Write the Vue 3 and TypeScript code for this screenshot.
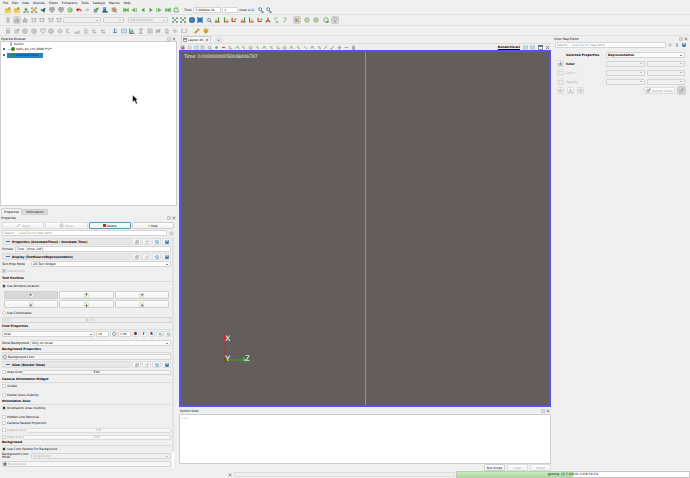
<script setup lang="ts">
import { ref } from 'vue'

const menus = ['File', 'Edit', 'View', 'Sources', 'Filters', 'Extractors', 'Tools', 'Catalyst', 'Macros', 'Help']

const fileTools = ['folder', 'folder', 'import', 'expand', 'connect', 'shield', 'shield', 'refresh', 'undo', 'redo', 'leaf', 'server', 'palette']
const vcrTools = ['first', 'stepback', 'playback', 'play', 'stepfwd', 'last', 'loop']
const colorTools = ['doc', 'bars', 'bars', 'range', 'range', 'range', 'range']
const cameraTools = ['fit', 'fit', 'globe', 'box', 'zoombox', 'axisA', 'axisB', 'axisC', 'axisA', 'axisB', 'axisC', 'iso', 'rotl', 'rotr']
const centerTools = ['orient', 'center', 'pick', 'reset', 'lamp']
const filterTools = ['calc', 'leafgray', 'cube', 'cube', 'shieldgray', 'cube', 'target', 'bars2', 'warp', 'stack', 'tree', 'tree']
const dataTools = ['plot', 'table', 'hist', 'sigma', 'sheet', 'stats', 'stack', 'sun', 'brace']
const rulerTools = ['ruler', 'tape']
const viewTools = ['redgrid', 'graydoc', 'table', 'sheet', 'zoombox', 'plus', 'minus', 'corner', 'selA', 'selB', 'poly', 'selB', 'selA', 'selB', 'corner', 'poly', 'selA', 'selB', 'arrow', 'selA', 'selB', 'pen', 'penred', 'plusgray', 'minusgray', 'trash']
const pressed = ['orient', 'lamp']
const headTools = ['copy', 'paste', 'reload', 'disk']
const anchors = [
  { id: 'tl', x: 5, y: 5 }, { id: 'tc', x: 8, y: 4 }, { id: 'tr', x: 11, y: 5 },
  { id: 'bl', x: 5, y: 11 }, { id: 'bc', x: 8, y: 12 }, { id: 'br', x: 11, y: 11 },
]
const anchor = ref('tl')
const location = ref('window')
const memory = ref(50)
</script>

<template>
  <div class="app">
    <svg class="defs" aria-hidden="true">
      <symbol id="folder" viewBox="0 0 16 16"><path d="M1 4h5l2 2h7v9H1z" fill="#d9a520" /><path d="M3 8h13l-2 7H1z" fill="#f6cf52" /><path d="M9 1h5v5h-5z" fill="#6b9a45" /></symbol>
      <symbol id="import" viewBox="0 0 16 16"><path d="M8 1l5 7H3z" fill="#55a148" /><path d="M8 7v5M3 14l5-4 5 4" stroke="#64735f" stroke-width="2" fill="none" /><path d="M1 12h4v4H1zM11 12h4v4h-4z" fill="#78927a" /></symbol>
      <symbol id="expand" viewBox="0 0 16 16"><path d="M4 4l8 8M12 4l-8 8" stroke="#e2b52c" stroke-width="4" /><path d="M1 1h5L1 6zM15 1h-5l5 5zM1 15h5l-5-5zM15 15h-5l5-5z" fill="#236aa3" /></symbol>
      <symbol id="connect" viewBox="0 0 16 16"><path d="M1 8l14-6-4 13-4-4z" fill="#214d64" /><path d="M1 8l10-4-5 7z" fill="#4fa64a" /></symbol>
      <symbol id="shield" viewBox="0 0 16 16"><path d="M2 2h12v7l-6 6-6-6z" fill="#d5d5d5" stroke="#868686" stroke-width="2" /><path d="M3 6h10M8 3v10" stroke="#888" stroke-width="2" /></symbol>
      <symbol id="shieldgray" viewBox="0 0 16 16"><path d="M2 2h12v7l-6 6-6-6z" fill="#ddd" stroke="#aaa" stroke-width="2" /></symbol>
      <symbol id="refresh" viewBox="0 0 16 16"><circle cx="8" cy="8" r="6" fill="#dcefd8" stroke="#58a44b" stroke-width="2" /><path d="M4 8h8M8 4l4 4-4 4" stroke="#58a44b" stroke-width="2" fill="none" /></symbol>
      <symbol id="undo" viewBox="0 0 16 16"><path d="M0 7l6-5v3c6-1 10 3 9 8-2-4-5-5-9-4v4z" fill="#cf2a1e" /></symbol>
      <symbol id="redo" viewBox="0 0 16 16"><path d="M15 7L9 3v3C4 5 1 8 2 12c2-3 4-4 7-3v3z" fill="#bbb" /></symbol>
      <symbol id="leaf" viewBox="0 0 16 16"><path d="M2 5h9v10H2z" fill="#8b9ba0" /><path d="M7 8C7 3 10 1 15 1c0 6-3 9-8 7z" fill="#4ba044" /></symbol>
      <symbol id="leafgray" viewBox="0 0 16 16"><path d="M2 5h9v9H2z" fill="#ccc" stroke="#999" /><path d="M7 8c0-5 3-7 8-7 0 6-3 9-8 7z" fill="#9caa98" /></symbol>
      <symbol id="server" viewBox="0 0 16 16"><path d="M3 1h8v11H3z" fill="#2c79b5" /><path d="M1 11h14v4H1z" fill="#285678" /><path d="M4 4h5" stroke="#fff" /></symbol>
      <symbol id="palette" viewBox="0 0 16 16"><circle cx="8" cy="7" r="6" fill="#d8b590" stroke="#977158" /><circle cx="6" cy="5" r="2" fill="#d94834" /><circle cx="11" cy="7" r="2" fill="#4aa14c" /><path d="M9 8l6 7" stroke="#704c36" stroke-width="2" /></symbol>
      <symbol id="first" viewBox="0 0 16 16"><path d="M1 2h3v12H1zM15 2v12L9 8zM9 2v12L3 8z" fill="#55a448" /></symbol>
      <symbol id="last" viewBox="0 0 16 16"><path d="M15 2h-3v12h3zM1 2v12l6-6zM7 2v12l6-6z" fill="#55a448" /></symbol>
      <symbol id="stepback" viewBox="0 0 16 16"><path d="M11 2v12L1 8zM13 2h2v12h-2z" fill="#6cad60" /></symbol>
      <symbol id="stepfwd" viewBox="0 0 16 16"><path d="M5 2v12l10-6zM1 2h2v12H1z" fill="#6cad60" /></symbol>
      <symbol id="playback" viewBox="0 0 16 16"><path d="M12 2v12L3 8z" fill="#58a74a" /></symbol>
      <symbol id="play" viewBox="0 0 16 16"><path d="M4 2v12l9-6z" fill="#58a74a" /></symbol>
      <symbol id="loop" viewBox="0 0 16 16"><path d="M10 3H3v10h11V7M9 0l4 3-4 4" fill="none" stroke="#4b9c40" stroke-width="2" /></symbol>
      <symbol id="timezoom" viewBox="0 0 16 16"><circle cx="6" cy="6" r="4" fill="#e4eef5" stroke="#376d92" stroke-width="2" /><path d="M9 9l5 5M9 14h6" stroke="#34516a" stroke-width="2" /></symbol>
      <symbol id="doc" viewBox="0 0 16 16"><path d="M4 1h8v14H4z" fill="#aaa" /><path d="M5 4h6M5 8h6" stroke="#eee" /></symbol>
      <symbol id="bars" viewBox="0 0 16 16"><path d="M2 6h3v9H2zM6 2h4v13H6zM11 5h3v10h-3z" fill="#9d9d9d" /></symbol>
      <symbol id="range" viewBox="0 0 16 16"><path d="M1 5h14M3 2v6M12 2v6" stroke="#999" stroke-width="2" /><path d="M2 10h5v4H2zM9 10h5v4H9z" fill="#aaa" /></symbol>
      <symbol id="fit" viewBox="0 0 16 16"><path d="M3 3l10 10M13 3L3 13" stroke="#64886a" stroke-width="2" /><path d="M1 1h5L1 6zM15 1h-5l5 5zM1 15h5l-5-5zM15 15h-5l5-5z" fill="#3b6a43" /></symbol>
      <symbol id="globe" viewBox="0 0 16 16"><circle cx="8" cy="8" r="8" fill="#246b9f" /><path d="M8 0v16M0 8h16" stroke="#a3cbe5" /></symbol>
      <symbol id="box" viewBox="0 0 16 16"><path d="M1 2h14v12H1z" fill="#2279b7" /><path d="M0 0h4v4H0zM12 0h4v4h-4zM0 12h4v4H0zM12 12h4v4h-4z" fill="#5792b8" /></symbol>
      <symbol id="zoombox" viewBox="0 0 16 16"><path d="M1 1h12v12H1z" fill="none" stroke="#aaa" stroke-dasharray="2" /><circle cx="8" cy="8" r="4" fill="#dceaf3" stroke="#648ba5" stroke-width="2" /><path d="M11 11l4 4" stroke="#555" stroke-width="2" /></symbol>
      <symbol id="axisA" viewBox="0 0 16 16"><path d="M2 13h13" stroke="#ba2c20" stroke-width="3" /><path d="M12 1v10" stroke="#4e963e" stroke-width="3" /><path d="M3 8h6" stroke="#d3a52b" stroke-width="3" /></symbol>
      <symbol id="axisB" viewBox="0 0 16 16"><path d="M4 1v12" stroke="#4e963e" stroke-width="3" /><path d="M3 13h12" stroke="#ce4030" stroke-width="3" /><path d="M8 8h6" stroke="#e0b75b" stroke-width="3" /></symbol>
      <symbol id="axisC" viewBox="0 0 16 16"><path d="M3 2v10h10" fill="none" stroke="#b74b30" stroke-width="3" /><path d="M7 7h8M11 3v4" stroke="#609a4d" stroke-width="2" /></symbol>
      <symbol id="iso" viewBox="0 0 16 16"><path d="M8 1v8" stroke="#55823e" stroke-width="3" /><path d="M8 8l-6 6" stroke="#ba3025" stroke-width="3" /><path d="M8 8l6 6" stroke="#ab542b" stroke-width="3" /></symbol>
      <symbol id="rotl" viewBox="0 0 16 16"><path d="M12 3C5 0 1 6 7 9M6 14h8l-3-4" fill="none" stroke="#7a9b73" stroke-width="2" /></symbol>
      <symbol id="rotr" viewBox="0 0 16 16"><path d="M4 3c7-3 11 3 5 6M3 14l7-5" fill="none" stroke="#7a9b73" stroke-width="2" /></symbol>
      <symbol id="orient" viewBox="0 0 16 16"><path d="M5 2v9h9" fill="none" stroke="#688957" stroke-width="2" /><path d="M4 12l6-7" stroke="#c54732" stroke-width="2" /><circle cx="12" cy="4" r="2" fill="#e3a52a" /></symbol>
      <symbol id="center" viewBox="0 0 16 16"><circle cx="8" cy="8" r="6" fill="none" stroke="#6a9a52" stroke-width="2" /><circle cx="8" cy="8" r="2" fill="#ba5840" /></symbol>
      <symbol id="pick" viewBox="0 0 16 16"><circle cx="8" cy="8" r="6" fill="none" stroke="#6a9a52" stroke-width="2" /><path d="M5 8h6M8 5v6" stroke="#d37a39" stroke-width="2" /></symbol>
      <symbol id="reset" viewBox="0 0 16 16"><circle cx="8" cy="8" r="6" fill="none" stroke="#5f9c54" stroke-width="2" /><path d="M9 13h6" stroke="#37663a" stroke-width="3" /></symbol>
      <symbol id="lamp" viewBox="0 0 16 16"><circle cx="8" cy="6" r="4" fill="#e8e8e8" stroke="#999" stroke-width="2" /><path d="M6 11h4v4H6z" fill="#999" /></symbol>
      <symbol id="calc" viewBox="0 0 16 16"><path d="M3 1h10v14H3z" fill="#aaa" /><path d="M5 3h6v3H5z" fill="#eee" /><path d="M5 9h6M5 12h6" stroke="#ddd" stroke-dasharray="2 1" /></symbol>
      <symbol id="cube" viewBox="0 0 16 16"><path d="M2 5l6-3 6 3v7l-6 3-6-3z" fill="#ccc" stroke="#a0a0a0" stroke-width="2" /><path d="M2 5l6 3 6-3M8 8v7" stroke="#aaa" fill="none" /></symbol>
      <symbol id="stack" viewBox="0 0 16 16"><path d="M2 3h9M4 7h10M2 11h9M4 14h10" stroke="#a5a5a5" stroke-width="2" /></symbol>
      <symbol id="target" viewBox="0 0 16 16"><circle cx="8" cy="8" r="5" fill="none" stroke="#aaa" stroke-width="2" /><path d="M8 0v16M0 8h16" stroke="#bbb" stroke-width="2" /></symbol>
      <symbol id="bars2" viewBox="0 0 16 16"><path d="M4 2v12M4 3h7M4 8h5M4 13h9" stroke="#aaa" stroke-width="2" /></symbol>
      <symbol id="warp" viewBox="0 0 16 16"><path d="M1 12l5-4 3 3 6-7v11H1z" fill="#b5b5b5" /></symbol>
      <symbol id="tree" viewBox="0 0 16 16"><path d="M3 4h6v4H3zM7 10h7v4H7z" fill="#aaa" /><path d="M5 8v4h3M9 6h4" stroke="#9aaa96" stroke-width="2" fill="none" /></symbol>
      <symbol id="plot" viewBox="0 0 16 16"><path d="M2 2h12v12H2z" fill="#cce1ef" /><path d="M7 1v9M3 12h10" stroke="#2b78ae" stroke-width="2" /></symbol>
      <symbol id="table" viewBox="0 0 16 16"><path d="M1 3h14v10H1z" fill="#dce8f0" stroke="#93afc2" stroke-width="2" /><path d="M1 7h14M7 3v10" stroke="#a3bccc" /></symbol>
      <symbol id="hist" viewBox="0 0 16 16"><path d="M2 1v14h13" fill="none" stroke="#447" stroke-width="2" /><path d="M4 8h3v6H4z" fill="#3080c4" /><path d="M7 3h3v11H7z" fill="#57b450" /><path d="M10 6h3v8h-3z" fill="#dfc43b" /></symbol>
      <symbol id="sigma" viewBox="0 0 16 16"><path d="M13 3H4l5 5-5 6h9" fill="none" stroke="#858585" stroke-width="2" /></symbol>
      <symbol id="sheet" viewBox="0 0 16 16"><path d="M2 2h12v12H2z" fill="#ddd" stroke="#999" /><path d="M4 5h8M4 8h8M4 11h8" stroke="#999" /></symbol>
      <symbol id="stats" viewBox="0 0 16 16"><path d="M2 3h12v11H2z" fill="#ccc" /><path d="M3 12l4-5 3 3 4-7" fill="none" stroke="#888" stroke-width="2" /></symbol>
      <symbol id="sun" viewBox="0 0 16 16"><circle cx="8" cy="8" r="5" fill="#ccc" /><path d="M8 0v16M0 8h16" stroke="#bbb" /></symbol>
      <symbol id="brace" viewBox="0 0 16 16"><path d="M4 3H2v10h2M12 3h2v10h-2M6 12h4" fill="none" stroke="#999" stroke-width="2" /></symbol>
      <symbol id="ruler" viewBox="0 0 16 16"><path d="M1 12L12 1l3 3L4 15z" fill="#dfa129" stroke="#b77d1b" /></symbol>
      <symbol id="tape" viewBox="0 0 16 16"><path d="M2 3l6-2 7 3-3 8-6 3-4-5z" fill="#d59a28" /><path d="M6 6l6-1" stroke="#f2d36f" stroke-width="2" /></symbol>
      <symbol id="redgrid" viewBox="0 0 16 16"><path d="M2 2h12v12H2z" fill="#8e7d7d" /><path d="M7 7h7v7H7z" fill="#bd4d43" /><path d="M4 4h4v3H4z" fill="#ddd" /></symbol>
      <symbol id="graydoc" viewBox="0 0 16 16"><path d="M3 3h10v10H3z" fill="#ddd" stroke="#bbb" stroke-width="2" /></symbol>
      <symbol id="plus" viewBox="0 0 16 16"><path d="M8 3v10M3 8h10" stroke="#67a854" stroke-width="4" /></symbol>
      <symbol id="minus" viewBox="0 0 16 16"><path d="M3 8h10" stroke="#cd3929" stroke-width="4" /></symbol>
      <symbol id="plusgray" viewBox="0 0 16 16"><path d="M8 2v12M2 8h12" stroke="#999" stroke-width="4" /></symbol>
      <symbol id="minusgray" viewBox="0 0 16 16"><path d="M2 8h12" stroke="#999" stroke-width="3" /></symbol>
      <symbol id="corner" viewBox="0 0 16 16"><path d="M4 3v9h9" fill="none" stroke="#a5705c" stroke-width="2" /><path d="M6 4l7 9" stroke="#95a765" stroke-width="2" /></symbol>
      <symbol id="selA" viewBox="0 0 16 16"><path d="M2 12l6-9 3 7" fill="none" stroke="#70ab62" stroke-width="3" /><path d="M9 8l5 6" stroke="#888" stroke-width="2" /></symbol>
      <symbol id="selB" viewBox="0 0 16 16"><path d="M2 3h9v6H2z" fill="#b9d0b2" /><path d="M7 5l7 9-6-2z" fill="#8b9687" /></symbol>
      <symbol id="poly" viewBox="0 0 16 16"><path d="M2 8l5-5 7 4-3 7-6-1z" fill="#e4c5bb" stroke="#85a777" stroke-width="2" /></symbol>
      <symbol id="arrow" viewBox="0 0 16 16"><path d="M3 4l9 8" stroke="#777" stroke-width="2" /></symbol>
      <symbol id="pen" viewBox="0 0 16 16"><path d="M3 13L13 3" stroke="#62a355" stroke-width="3" /></symbol>
      <symbol id="penoff" viewBox="0 0 16 16"><path d="M3 13L13 3" stroke="#aaa" stroke-width="3" /></symbol>
      <symbol id="penred" viewBox="0 0 16 16"><path d="M5 11l8-8" stroke="#62a355" stroke-width="3" /><path d="M2 12h5" stroke="#c63a31" stroke-width="3" /></symbol>
      <symbol id="trash" viewBox="0 0 16 16"><path d="M3 3h10M6 2h4M4 5h8v10H4z" fill="#999" stroke="#888" /></symbol>
      <symbol id="copy" viewBox="0 0 16 16"><path d="M2 5h8v9H2zM6 2h8v9H6z" fill="#eee" stroke="#999" stroke-width="2" /></symbol>
      <symbol id="paste" viewBox="0 0 16 16"><path d="M3 6h8v8H3zM6 3h8v5" fill="none" stroke="#b0b0b0" stroke-width="2" /></symbol>
      <symbol id="reload" viewBox="0 0 16 16"><path d="M3 6V3h10v4M13 9v4H3V9M0 6h6M10 10h6" fill="none" stroke="#2d7199" stroke-width="2" /></symbol>
      <symbol id="disk" viewBox="0 0 16 16"><path d="M1 1h14v14H1z" fill="#2c6a9a" /><path d="M5 1h6v6H5z" fill="#eef" /></symbol>
      <symbol id="gear" viewBox="0 0 16 16"><circle cx="8" cy="8" r="5" fill="#eee" stroke="#999" stroke-width="2" /><circle cx="8" cy="8" r="1" fill="#999" /></symbol>
      <symbol id="float" viewBox="0 0 16 16"><path d="M2 2h12v12H2z" fill="#ddd" stroke="#aaa" stroke-width="2" /></symbol>
      <symbol id="close" viewBox="0 0 16 16"><path d="M2 2h12v12H2z" fill="#ddd" /><path d="M3 3l10 10M13 3L3 13" stroke="#888" stroke-width="3" /></symbol>
      <symbol id="window" viewBox="0 0 16 16"><path d="M1 2h14v12H1z" fill="#fff" stroke="#333" stroke-width="2" /><path d="M1 4h14" stroke="#333" stroke-width="3" /></symbol>
    </svg>

    <nav class="menubar"><a v-for="m in menus" :key="m" href="#">{{ m }}</a></nav>

    <div class="toolbar">
      <div class="tools file"><button v-for="(t, i) in fileTools" :key="i" :aria-label="t"><svg><use :href="'#' + t" /></svg></button></div>
      <div class="tools vcr"><button v-for="(t, i) in vcrTools" :key="i" :aria-label="t"><svg><use :href="'#' + t" /></svg></button></div>
      <label class="time">Time: <input class="timebox" value="5.00484e-10" /></label>
      <input class="stepbox" value="1" aria-label="Time step" /><span class="max">(max is 2)</span>
      <div class="tools timez"><button aria-label="Zoom in time"><svg><use href="#timezoom" /></svg></button><button aria-label="Zoom out time"><svg><use href="#timezoom" /></svg></button></div>
    </div>
    <div class="toolbar">
      <div class="tools color muted"><button v-for="(t, i) in colorTools" :key="i" :class="{ down: i === 1 }" :aria-label="t"><svg><use :href="'#' + t" /></svg></button></div>
      <div class="combos">
        <select class="c1" disabled aria-label="Array"><option></option></select>
        <select class="c2" disabled aria-label="Component"><option></option></select>
        <select class="c3" disabled aria-label="Representation"><option>Representation</option></select>
      </div>
      <div class="tools camera"><button v-for="(t, i) in cameraTools" :key="i" :aria-label="t"><svg><use :href="'#' + t" /></svg></button></div>
      <div class="tools centering"><button v-for="t in centerTools" :key="t" :class="{ down: pressed.includes(t) }" :aria-label="t"><svg><use :href="'#' + t" /></svg></button></div>
    </div>
    <div class="toolbar">
      <div class="tools filters muted"><button v-for="(t, i) in filterTools" :key="i" :aria-label="t"><svg><use :href="'#' + t" /></svg></button></div>
      <div class="tools data"><button v-for="(t, i) in dataTools" :key="i" :aria-label="t"><svg><use :href="'#' + t" /></svg></button></div>
      <div class="tools rulers"><button v-for="t in rulerTools" :key="t" :aria-label="t"><svg><use :href="'#' + t" /></svg></button></div>
    </div>

    <main class="body">
      <aside class="left">
        <div class="dockhead"><span>Pipeline Browser</span><svg><use href="#float" /></svg><svg><use href="#close" /></svg></div>
        <ul class="tree">
          <li class="root"><svg><use href="#doc" /></svg>builtin:</li>
          <li><i class="eye"></i><i class="branch"></i><i class="node"></i>helfs_pit_cnt_0000.f*vf*</li>
          <li><i class="eye"></i><span class="sel"><i class="node"></i>AnnotateTime1</span></li>
          <li class="pointer"><svg class="cursor" viewBox="0 0 12 20"><path d="M1 1v15l4-4 3 7 3-1-3-7h4z" fill="#111" stroke="#fff" /></svg></li>
        </ul>
        <div class="tabs"><button class="tab on">Properties</button><button class="tab">Information</button></div>
        <div class="dockhead"><span>Properties</span><svg><use href="#float" /></svg><svg><use href="#close" /></svg></div>
        <div class="actions">
          <button class="btn" disabled><svg><use href="#penoff" /></svg>Apply</button>
          <button class="btn" disabled><svg><use href="#gear" /></svg>Reset</button>
          <button class="btn focus"><i class="redsq"></i>Delete</button>
          <button class="btn"><i class="help">?</i>Help</button>
        </div>
        <div class="search"><input placeholder="Search ... (use Esc to clear text)" aria-label="Search properties" /><button aria-label="Advanced"><svg><use href="#gear" /></svg></button></div>

        <div class="scroller">
          <div class="props">
            <div class="sect"><h2><i></i>Properties (AnnotateTime1 : Annotate Time)</h2><button v-for="t in headTools" :key="t" :aria-label="t"><svg><use :href="'#' + t" /></svg></button></div>
            <label class="row">Format:<input class="grow" value="Time: {time:.20f}" /></label>
            <div class="sect"><h2><i></i>Display (TextSourceRepresentation)</h2><button v-for="t in headTools" :key="t" :aria-label="t"><svg><use :href="'#' + t" /></svg></button></div>
            <label class="row"><span class="modelabel">Text Prop Mode</span><select class="grow"><option>2D Text Widget</option></select></label>
            <label class="row off"><input type="checkbox" checked disabled />Interactivity</label>
            <h3 class="lead">Text Position</h3>
            <label class="row tall"><input v-model="location" type="radio" value="window" />Use Window Location</label>
            <div class="anchors">
              <button v-for="a in anchors" :key="a.id" class="btn" :class="{ down: anchor === a.id }" :aria-label="a.id" @click="anchor = a.id">
                <svg viewBox="0 0 16 16"><path d="M2 2h12v12H2z" fill="#f3f8f0" stroke="#b9d9aa" stroke-width="2" /><circle :cx="a.x" :cy="a.y" r="3" fill="#657c59" /><path :d="`M8 8L${a.x} ${a.y}`" stroke="#555" stroke-width="3" /></svg>
              </button>
            </div>
            <label class="row tall"><input v-model="location" type="radio" value="coords" />Use Coordinates</label>
            <div class="pair"><input value="0.05" disabled aria-label="X" /><input value="0.05" disabled aria-label="Y" /></div>
            <h3>Font Properties</h3>
            <div class="row font">
              <select class="grow" aria-label="Font family"><option>Arial</option></select><input class="num" value="18" aria-label="Size" /><button class="swatch" aria-label="Font colour"><i class="ring"></i></button><input class="num" value="1.00" aria-label="Opacity" />
              <button class="style"><b>B</b></button><button class="style"><b><em>I</em></b></button><button class="style"><b>S</b></button><button aria-label="Align"><svg><use href="#zoombox" /></svg></button><button aria-label="Vertical align"><svg><use href="#zoombox" /></svg></button>
            </div>
            <label class="row">Show Background<select class="grow"><option>Only on hover</option></select></label>
            <h3>Background Properties</h3>
            <button class="colorbtn"><i class="ring"></i>Background Color</button>
            <div class="sect"><h2><i></i>View (Render View)</h2><button v-for="t in headTools" :key="t" :aria-label="t"><svg><use :href="'#' + t" /></svg></button></div>
            <div class="row"><label><input type="checkbox" />Axes Grid</label><button class="btn grow">Edit</button></div>
            <h3 class="lead">Camera Orientation Widget</h3>
            <label class="row spaced"><input type="checkbox" />Visible</label>
            <label class="row"><input type="checkbox" />Center Axes Visibility</label>
            <h3>Orientation Axes</h3>
            <label class="row spaced"><input type="checkbox" checked />Orientation Axes Visibility</label>
            <label class="row snug"><input type="checkbox" />Hidden Line Removal</label>
            <label class="row"><input type="checkbox" />Camera Parallel Projection</label>
            <div class="row off"><label><input type="checkbox" disabled />Legend Grid</label><button class="btn grow" disabled>Edit</button></div>
            <div class="row off snug"><label><input type="checkbox" disabled />Polar Grid</label><button class="btn grow" disabled>Edit</button></div>
            <h3>Background</h3>
            <label class="row snug"><input type="checkbox" checked />Use Color Palette For Background</label>
            <label class="row mode"><span class="modelabel">Background Color Mode</span><select class="grow" disabled><option>Single Color</option></select></label>
            <button class="colorbtn off"><i class="ring dark"></i>Background</button>
          </div>
          <div class="bar"><i></i></div>
        </div>
      </aside>

      <section class="center">
        <div class="layouts"><button class="ltab"><svg><use href="#window" /></svg>Layout #1<svg><use href="#close" /></svg></button><button class="add">+</button></div>
        <div class="viewbar">
          <div class="tools view muted"><button v-for="(t, i) in viewTools" :key="i" :aria-label="t"><svg><use :href="'#' + t" /></svg></button></div>
          <a href="#">RenderView1</a>
          <div class="tools win"><button v-for="(t, i) in ['table', 'table', 'window', 'close']" :key="i" :aria-label="t"><svg><use :href="'#' + t" /></svg></button></div>
        </div>
        <div class="render">
          <p>Time: 0.00000000050048406797</p>
          <i class="beam"></i>
          <svg class="axes" viewBox="0 0 34 34">
            <path d="M6 8v20" stroke="#a83434" /><path d="M6 29h20" stroke="#3b9f3b" />
            <path d="M4 9l2-6 2 6z" fill="#e01c1c" /><path d="M24 26l5 3-5 2z" fill="#17d517" /><circle cx="6" cy="29" r="2" fill="#665c08" />
            <text x="6" y="10">X</text><text x="6" y="30">Y</text><text x="26" y="30">Z</text>
          </svg>
        </div>
        <div class="dockhead py"><span>Python Shell</span><svg><use href="#float" /></svg><svg><use href="#close" /></svg></div>
        <textarea class="console" aria-label="Python Shell">&gt;&gt;&gt;</textarea>
        <div class="runs"><button class="btn">Run Script</button><button class="btn" disabled>Clear</button><button class="btn" disabled>Reset</button></div>
      </section>

      <aside class="right">
        <div class="dockhead"><span>Color Map Editor</span><svg><use href="#float" /></svg><svg><use href="#close" /></svg></div>
        <div class="search"><input placeholder="Search ... (use Esc to clear text)" aria-label="Search colour map" /><button v-for="t in ['gear', 'doc', 'disk']" :key="t" :aria-label="t"><svg class="tool"><use :href="'#' + t" /></svg></button></div>
        <div class="cmap">
          <i></i><label for="rep"><b>Selected Properties</b></label><select id="rep" class="wide strong"><option>Representation</option></select>
          <button aria-label="Color bar"><svg><use href="#bars" /></svg></button><b>Color</b><select disabled aria-label="Color array"><option></option></select><select disabled aria-label="Color component"><option></option></select>
          <button aria-label="Second color"><svg class="faded"><use href="#range" /></svg></button><span class="off">Color Y</span><select disabled aria-label="Color Y array"><option></option></select><select disabled aria-label="Color Y component"><option></option></select>
          <button aria-label="Opacity"><svg class="faded"><use href="#range" /></svg></button><span class="off">Opacity</span><select disabled aria-label="Opacity array"><option></option></select><select disabled aria-label="Opacity component"><option></option></select>
        </div>
        <div class="mapfoot"><button class="btn" disabled aria-label="Reset"><svg><use href="#gear" /></svg></button><button class="btn" disabled aria-label="Save"><svg class="faded"><use href="#import" /></svg></button><button class="btn" disabled aria-label="Preset"><svg><use href="#graydoc" /></svg></button><button class="btn rv" disabled><svg><use href="#leafgray" /></svg>Render Views</button><button class="btn down" aria-label="Auto render"><svg><use href="#leafgray" /></svg></button></div>
      </aside>
    </main>

    <footer class="status">
      <button aria-label="Abort"><svg><use href="#close" /></svg></button><span class="slot"></span>
      <div class="mem"><i :style="{ width: memory + '%' }"></i><span>gamma: 15.7 GiB/31.2 GiB 50.2%</span></div>
    </footer>
  </div>
</template>

<style>
body { background: #efefef; }
</style>

<style scoped>
.app, .app * { box-sizing: border-box; }
.app { min-height: 100vh; display: flex; flex-direction: column; background: #efefef; color: #000; font: 3px/4px "DejaVu Sans", sans-serif; text-rendering: geometricPrecision; }
.defs { display: none; }
svg { width: 7px; height: 7px; flex: none; display: block; }
i { font-style: normal; flex: none; }
button, input, select, textarea { font: inherit; color: inherit; margin: 0; padding: 0; border: 0; background: none; border-radius: 1px; min-width: 0; outline: 0; text-rendering: inherit; }
a { color: inherit; text-decoration: none; }
input:not([type]), select { appearance: none; background: #fff; border: 1px solid #d4d4d4; height: 6px; padding: 0 1px; line-height: 4px; }
select { background: #fafafa linear-gradient(#888, #888) right 2px center / 2px 1px no-repeat; }
select:disabled { background: #f0f0f0 linear-gradient(#bbb, #bbb) right 2px center / 2px 1px no-repeat; color: #aaa; opacity: 1; }
input[type="checkbox"], input[type="radio"] { appearance: none; width: 4px; height: 4px; background: #fff; border: 1px solid #d2d2d2; border-radius: 0; flex: none; }
input[type="radio"] { border-radius: 50%; }
input[type="checkbox"]:checked { background: #333; }
input[type="radio"]:checked { background: #111; }
input[type="checkbox"]:disabled:checked { background: #bbb; }
.off { color: #aaa; }
.grow { flex: 1; }
.btn { display: flex; align-items: center; justify-content: center; gap: 1px; height: 7px; background: linear-gradient(#fdfdfd, #f1f1f1); border: 1px solid #cfcfcf; white-space: nowrap; }
.btn svg { width: 5px; height: 5px; }
.btn:disabled { color: #aaa; border-color: #dcdcdc; }
.down { background: #d9d9d9; box-shadow: 0 0 0 1px #cdcdcd; }
.focus { border-color: #5b94bd; }

.menubar { display: flex; gap: 4px; height: 5px; padding-left: 3px; align-items: center; }
.toolbar { display: flex; align-items: center; height: 10px; padding-left: 5px; border-bottom: 1px solid #e2e2e2; white-space: nowrap; }
.toolbar svg { width: 6px; height: 6px; }
.toolbar:nth-of-type(2) { height: 11px; }
.tools { display: flex; justify-content: space-between; align-items: center; }
.muted { opacity: 0.85; }
.file { width: 112px; }
.vcr { width: 56px; margin-left: 6px; }
.time { display: flex; align-items: center; gap: 1px; margin: 0 1px 0 5px; }
.timebox { width: 28px; }
.stepbox { width: 16px; margin-right: 1px; }
.max { width: 16px; }
.timez { width: 14px; margin-left: 3px; }
.color { width: 57px; }
.combos { display: flex; gap: 2px; margin: 0 4px 0 1px; }
.c1 { width: 38px; } .c2 { width: 21px; } .c3 { width: 40px; margin-left: 2px; }
.camera { width: 116px; }
.centering { width: 44px; margin-left: 6px; }
.filters { width: 101px; }
.data { width: 75px; margin-left: 6px; }
.rulers { width: 15px; margin-left: 7px; }

.body { flex: 1; display: grid; grid-template-columns: 177px minmax(0, 1fr) 137px; column-gap: 2px; }
.left, .center, .right { display: flex; flex-direction: column; min-width: 0; }
.dockhead { display: flex; align-items: center; gap: 1px; height: 5px; padding: 0 1px; }
.dockhead > :first-child { flex: 1; }
.dockhead svg { width: 4px; height: 4px; }
.tree { position: relative; flex: 1; min-height: 80px; margin: 0; padding: 0 2px; list-style: none; background: #fff; border: 1px solid #cdcdcd; }
.tree li { display: flex; align-items: center; height: 6px; white-space: nowrap; }
.tree .root { height: 4px; padding-left: 6px; gap: 1px; }
.tree .root svg { width: 4px; height: 4px; }
.eye { width: 2px; height: 2px; background: #174264; border-radius: 50%; }
.branch { width: 3px; height: 1px; margin-left: 3px; background: #ccc; }
.node { width: 4px; height: 4px; margin-right: 1px; border-radius: 50%; background: #3b8536; }
.sel { display: flex; align-items: center; width: 36px; height: 5px; margin-left: 2px; padding-left: 4px; background: #2684c8; color: #0b2c48; }
.cursor { position: absolute; left: 131px; top: 52px; width: 6px; height: 11px; }
.tabs { display: flex; align-items: flex-end; height: 9px; padding-left: 1px; }
.tab { height: 6px; padding: 0 3px; background: #dcdcdc; border: 1px solid #d0d0d0; }
.tab.on { height: 7px; padding: 0 2px; background: #f2f2f2; border-bottom: 0; }
.actions { display: grid; grid-template-columns: repeat(4, 1fr); gap: 1px; padding: 2px 3px 1px 2px; }
.redsq { width: 3px; height: 3px; background: #bd2a20; }
.help { color: #59963b; font-weight: 700; }
.search { display: flex; gap: 1px; padding: 0 3px 0 2px; }
.search input { flex: 1; }
.search input::placeholder { color: #888; opacity: 1; }
.search button { width: 6px; }
.search svg { width: 5px; height: 5px; margin: auto; }
.search .tool { width: 4px; height: 4px; }
.scroller { display: flex; padding: 1px 3px 3px 2px; }
.props { flex: 1; min-width: 0; }
.bar { width: 2px; background: #e2e2e2; display: flex; align-items: flex-end; margin-left: 1px; }
.bar i { width: 2px; height: 16px; background: #fff; }
.sect { display: flex; gap: 1px; height: 7px; margin: 1px 0; }
.sect h2 { flex: 1; display: flex; align-items: center; gap: 2px; margin: 0; padding-left: 3px; font: inherit; font-weight: 700; background: #e7e7e7; border: 1px solid #dedede; }
.sect h2 i { width: 4px; height: 1px; background: #2b80b9; }
.sect button { width: 9px; display: grid; place-items: center; background: #f5f5f5; border: 1px solid #ddd; }
.sect svg { width: 4px; height: 4px; }
.row, .row label { display: flex; align-items: center; }
.row { height: 6px; gap: 1px; margin-bottom: 1px; white-space: nowrap; }
.row .btn { height: 5px; }
.row label { gap: 1px; }
.modelabel { width: 28px; }
.tall { height: 8px; margin: 0; }
.spaced { margin-bottom: 3px; }
.snug { margin-bottom: 0; }
.props h3 { height: 6px; margin: 0; font-size: 3px; line-height: 5px; font-weight: 700; border-bottom: 1px solid #dadada; }
.props .lead { margin-top: 2px; }
.anchors { display: grid; grid-template-columns: repeat(3, 1fr); gap: 1px; margin: 1px 2px; }
.anchors .btn { height: 8px; }
.anchors .down { background: #d8d8d8; box-shadow: none; }
.pair { display: grid; grid-template-columns: 1fr 1fr; margin-bottom: 1px; }
.pair input { background: #ededed; color: #bbb; }
.font { margin: 1px 0 3px; }
.num { width: 13px; }
.font button { width: 7px; height: 6px; background: #fafafa; border: 1px solid #ddd; line-height: 4px; display: grid; place-items: center; }
.font .style { font-size: 4px; }
.font button svg { width: 4px; height: 4px; }
.ring { display: block; width: 4px; height: 4px; background: #fff; border: 1px solid #999; border-radius: 50%; }
.dark { background: #777; }
.colorbtn { display: flex; align-items: center; gap: 1px; width: 100%; height: 6px; margin: 1px 0; border: 1px solid #d5d5d5; background: #f6f6f6; }
.mode { height: 8px; line-height: 3px; white-space: normal; margin-bottom: 0; }

.layouts { display: flex; align-items: center; gap: 4px; height: 7px; padding-left: 2px; }
.ltab { display: flex; align-items: center; gap: 1px; height: 7px; padding: 0 1px; background: #f8f8f8; border: 1px solid #ccc; border-bottom: 0; }
.ltab svg { width: 4px; height: 4px; }
.add { width: 8px; height: 6px; background: #e5e5e5; }
.viewbar { display: flex; align-items: center; height: 7px; padding: 0 1px; border-top: 1px solid #ddd; }
.view { width: 176px; }
.viewbar svg { width: 5px; height: 5px; }
.viewbar a { margin-left: auto; font-weight: 700; font-style: italic; text-decoration: underline; }
.win { width: 27px; margin-left: 3px; }
.render { position: relative; height: 357px; background: #635e5b; border: 2px solid #5552ed; }
.render p { position: absolute; left: 3px; top: 2px; margin: 0; color: #eee; font: 5px/6px "Liberation Sans", sans-serif; }
.beam { position: absolute; left: 50%; top: 0; bottom: 0; width: 1px; background: #96918d; }
.axes { position: absolute; left: 38px; bottom: 40px; width: 34px; height: 34px; }
.axes text { font: 8px "Liberation Sans", sans-serif; fill: #fff; }
.py { height: 7px; }
.console { display: block; width: 100%; flex: 1; min-height: 30px; resize: none; background: #fff; border: 1px solid #ccc; padding: 1px; color: #888; }
.runs { display: flex; justify-content: flex-end; gap: 2px; height: 7px; }
.runs .btn { width: 21px; }

.right { padding-right: 1px; }
.right .search { padding: 1px 2px; gap: 1px; }
.cmap { display: grid; grid-template-columns: 7px 38px 1fr 1fr; gap: 2px; align-items: center; padding: 3px 4px 0 4px; }
.cmap button { width: 7px; height: 7px; background: #f6f6f6; border: 1px solid #ddd; }
.cmap button svg { width: 5px; height: 5px; }
.cmap label, .cmap b, .cmap span { white-space: nowrap; }
.cmap .wide { grid-column: span 2; }
.strong { font-weight: 700; }
.mapfoot { display: flex; gap: 3px; padding: 2px 4px 0 4px; }
.mapfoot .btn { width: 7px; }
.mapfoot .rv { width: 31px; margin-left: auto; }
.faded { opacity: 0.5; }

.status { display: grid; grid-template-columns: 232px 1fr 234px; align-items: center; height: 7px; }
.status button { justify-self: end; }
.status button svg { width: 4px; height: 4px; }
.slot { height: 5px; margin: 0 1px 0 2px; border: 1px solid #dcdcdc; }
.mem { position: relative; height: 7px; background: #fff; border: 1px solid #c5c5c5; text-align: center; }
.mem i { display: block; height: 100%; background: linear-gradient(#c5efb9, #a8dc9b); }
.mem span { position: absolute; inset: 0; line-height: 5px; }
</style>
